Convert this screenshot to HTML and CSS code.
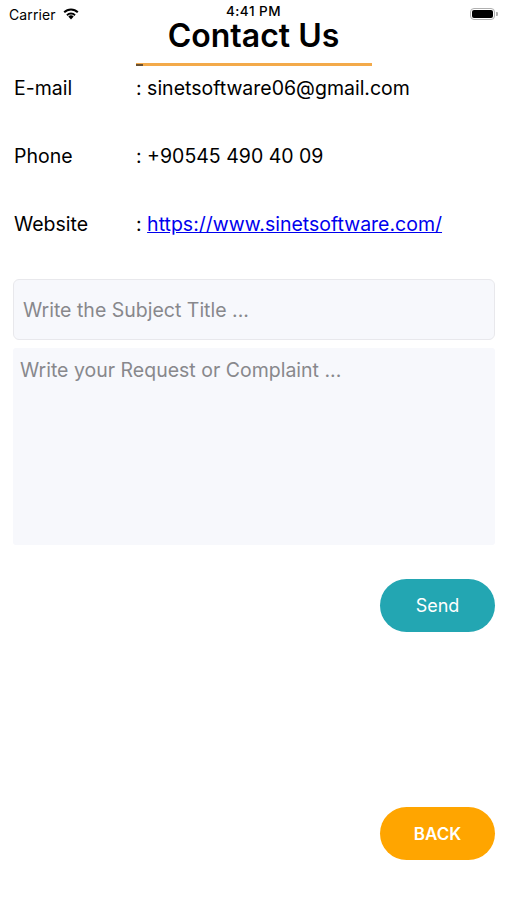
FILE: index.html
```html
<!DOCTYPE html>
<html lang="en">
<head>
    <meta charset="UTF-8">
    <meta name="viewport" content="width=device-width, initial-scale=1.0">
    <title>Contact Us</title>
    <link rel="stylesheet" href="styles.css">
</head>
<body>
    <div class="screen">
        <div class="status-bar">
            <div class="carrier">
                Carrier
                <svg class="wifi" width="18" height="13" viewBox="0 0 18 13">
                    <path d="M9 12.5 L6.3 9.6 A3.8 3.8 0 0 1 11.7 9.6 Z" fill="#000"/>
                    <path d="M4.3 7.5 A6.6 6.6 0 0 1 13.7 7.5 L12.4 8.9 A4.7 4.7 0 0 0 5.6 8.9 Z" fill="#000"/>
                    <path d="M1.5 4.6 A10.6 10.6 0 0 1 16.5 4.6 L15.1 6 A8.6 8.6 0 0 0 2.9 6 Z" fill="#000"/>
                </svg>
            </div>
            <div class="time">4:41 PM</div>
            <div class="battery">
                <span class="battery-body"><span class="battery-level"></span></span>
                <span class="battery-tip"></span>
            </div>
        </div>

        <h1 class="title">Contact Us</h1>
        <div class="title-line"><span class="title-line-start"></span></div>

        <div class="info">
            <div class="info-row">
                <span class="info-label">E-mail</span>
                <span class="info-value">: sinetsoftware06@gmail.com</span>
            </div>
            <div class="info-row">
                <span class="info-label">Phone</span>
                <span class="info-value">: +90545 490 40 09</span>
            </div>
            <div class="info-row">
                <span class="info-label">Website</span>
                <span class="info-value">: <a href="#" class="link">https://www.sinetsoftware.com/</a></span>
            </div>
        </div>

        <form class="contact-form">
            <input type="text" class="subject" placeholder="Write the Subject Title ...">
            <textarea class="message" placeholder="Write your Request or Complaint ..."></textarea>
            <div class="actions">
                <button type="button" class="btn btn-send">Send</button>
            </div>
        </form>

        <div class="footer">
            <button type="button" class="btn btn-back">BACK</button>
        </div>
    </div>
</body>
</html>
```

FILE: styles.css
```css
* {
    box-sizing: border-box;
}
body {
    margin: 0;
    padding: 0;
    background-color: #fff;
    font-family: Inter, "Liberation Sans", Arial, sans-serif;
    color: #000;
}
.screen {
    width: 507px;
    height: 900px;
    display: flex;
    flex-direction: column;
}
.status-bar {
    height: 26px;
    display: flex;
    align-items: center;
    justify-content: space-between;
    padding: 2px 9px 0 9px;
    font-size: 14px;
    position: relative;
}
.carrier {
    display: flex;
    align-items: center;
    gap: 6px;
    letter-spacing: 0.1px;
}
.wifi {
    margin-top: -2px;
}
.time {
    position: absolute;
    left: 0;
    right: 0;
    top: 5px;
    text-align: center;
    font-size: 13.5px;
    line-height: 13px;
    letter-spacing: 0.5px;
    font-weight: 500;
}
.battery {
    display: flex;
    align-items: center;
}
.battery-body {
    width: 25px;
    height: 12px;
    border: 1px solid #b0b0b0;
    border-radius: 4px;
    padding: 1px;
    display: block;
}
.battery-level {
    display: block;
    width: 100%;
    height: 100%;
    background-color: #000;
    border-radius: 2px;
}
.battery-tip {
    width: 2px;
    height: 4px;
    background-color: #b0b0b0;
    border-radius: 0 1px 1px 0;
    margin-left: 1px;
}
.title {
    margin: -3px 0 0 0;
    text-align: center;
    font-size: 32px;
    font-weight: 600;
    line-height: 26px;
}
.title-line {
    width: 236px;
    height: 3px;
    margin: 14px 0 0 136px;
    background-color: #f3aa4a;
}
.title-line-start {
    display: block;
    width: 7px;
    height: 2px;
    background-color: #6a5030;
    margin-top: 1px;
}
.info {
    padding: 0 14px;
    margin-top: 10px;
}
.info-row {
    display: flex;
    height: 68px;
    align-items: flex-start;
    font-size: 19.5px;
    line-height: 24px;
}
.info-label {
    width: 122px;
}
.link {
    color: #0000ee;
    text-decoration: underline;
}
.contact-form {
    padding: 0 12px 0 13px;
    margin-top: -1px;
    display: flex;
    flex-direction: column;
}
.subject {
    height: 61px;
    width: 100%;
    padding: 0 9px;
    font-size: 19.5px;
    font-family: inherit;
    background-color: #f7f8fc;
    border: 1px solid #e8e8ec;
    border-radius: 6px;
    outline: none;
}
.message {
    margin-top: 8px;
    height: 197px;
    width: 100%;
    padding: 10px 7px;
    font-size: 19.5px;
    font-family: inherit;
    background-color: #f7f8fc;
    border: none;
    border-radius: 3px;
    resize: none;
    outline: none;
}
.subject::placeholder,
.message::placeholder {
    color: #88888c;
}
.actions {
    display: flex;
    justify-content: flex-end;
    margin-top: 34px;
}
.btn {
    width: 115px;
    height: 53px;
    border: none;
    border-radius: 27px;
    color: #fff;
    font-family: inherit;
    cursor: pointer;
}
.btn-send {
    background-color: #23a6b2;
    font-size: 18px;
}
.btn-back {
    background-color: #ffa500;
    font-size: 17px;
    font-weight: 600;
}
.footer {
    margin-top: auto;
    display: flex;
    justify-content: flex-end;
    padding: 0 12px 40px 0;
}
```
